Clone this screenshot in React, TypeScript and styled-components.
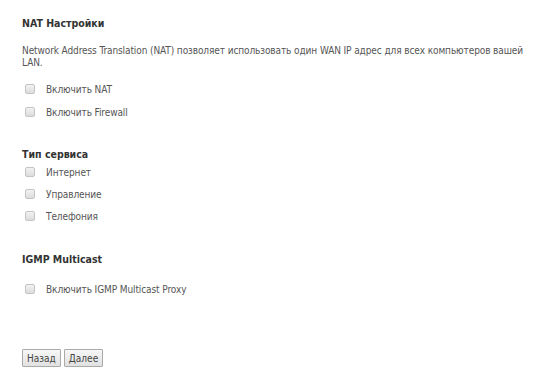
import React, { FC } from 'react';
import styled, { createGlobalStyle } from 'styled-components';

const Global = createGlobalStyle`
  html, body {
    margin: 0;
    padding: 0;
    background: #fff;
  }
  body {
    font-family: "DejaVu Sans Condensed", "DejaVu Sans", sans-serif;
    font-size: 10px;
    letter-spacing: -0.1px;
    color: #555;
  }
`;

const Page = styled.div`
  padding: 17px 8px 0 22px;
  width: 538px;
  height: 378px;
  box-sizing: border-box;
  display: flex;
  flex-direction: column;
`;

const Title = styled.h3<{ $top: number; $bottom: number }>`
  margin: ${(p) => p.$top}px 0 ${(p) => p.$bottom}px;
  font-size: 10.5px;
  font-weight: bold;
  color: #333;
  line-height: 13px;
  letter-spacing: 0;
`;

const Text = styled.p`
  margin: 0 0 14px;
  line-height: 12px;
`;

const Options = styled.div<{ $gap: number }>`
  display: flex;
  flex-direction: column;
  gap: ${(p) => p.$gap}px;
`;

const Row = styled.label`
  display: flex;
  align-items: center;
  height: 12px;
  padding-left: 3px;
`;

const Box = styled.span`
  width: 8px;
  height: 8px;
  border: 1px solid #c4c4c4;
  border-radius: 2px;
  background: linear-gradient(#f2f2f2, #dcdcdc);
  margin-right: 11px;
`;

const Buttons = styled.div`
  display: flex;
  gap: 3px;
  margin-top: auto;
  margin-bottom: 11px;
`;

const Button = styled.button`
  height: 18px;
  padding: 0 4px;
  font-family: inherit;
  font-size: 10px;
  color: #444;
  border: 1px solid #aaa;
  border-radius: 1px;
  background: linear-gradient(#f7f7f7, #e1e1e1);
`;

const Check: FC<{ label: string }> = ({ label }) => (
  <Row>
    <Box />
    {label}
  </Row>
);

export default function App() {
  return (
    <Page>
      <Global />
      <Title $top={0} $bottom={15}>NAT Настройки</Title>
      <Text>
        Network Address Translation (NAT) позволяет использовать один WAN IP адрес для всех компьютеров вашей LAN.
      </Text>
      <Options $gap={11}>
        <Check label="Включить NAT" />
        <Check label="Включить Firewall" />
      </Options>
      <Title $top={30} $bottom={5}>Тип сервиса</Title>
      <Options $gap={10}>
        <Check label="Интернет" />
        <Check label="Управление" />
        <Check label="Телефония" />
      </Options>
      <Title $top={31} $bottom={17}>IGMP Multicast</Title>
      <Options $gap={10}>
        <Check label="Включить IGMP Multicast Proxy" />
      </Options>
      <Buttons>
        <Button>Назад</Button>
        <Button>Далее</Button>
      </Buttons>
    </Page>
  );
}
